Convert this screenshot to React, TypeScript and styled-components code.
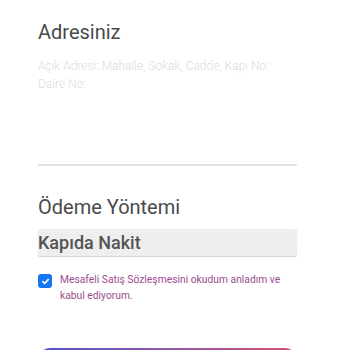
import styled, { createGlobalStyle } from "styled-components";

const GlobalStyle = createGlobalStyle`
  html, body {
    margin: 0;
    padding: 0;
    background: #ffffff;
    font-family: Roboto, "Liberation Sans", sans-serif;
  }
`;

const Page = styled.div`
  width: 350px;
  height: 350px;
  overflow: hidden;
  padding: 18px 53px 0 38px;
  box-sizing: border-box;
  display: flex;
  flex-direction: column;

  & > * {
    flex: none;
  }
`;

const SectionTitle = styled.h2<{ $top?: number }>`
  margin: ${({ $top }) => $top ?? 0}px 0 0;
  font-size: 20px;
  font-weight: 400;
  color: #4a4a4a;
  line-height: 28px;
`;

const AddressArea = styled.textarea`
  margin-top: 11px;
  width: 100%;
  height: 109px;
  box-sizing: border-box;
  border: none;
  border-bottom: 2px solid #e2e2e2;
  padding: 0;
  font-family: Roboto, "Liberation Sans", sans-serif;
  font-size: 12px;
  font-weight: 300;
  line-height: 18px;
  color: #444;
  resize: none;
  outline: none;
  background: transparent;

  &::placeholder {
    color: #dcdcdc;
  }
`;

const SelectBox = styled.div`
  margin-top: 8px;
  height: 27px;
  background: #eeeeee;
  border-radius: 2px;
  box-shadow: 0 1px 1px rgba(0, 0, 0, 0.18);
  display: flex;
  align-items: center;
  font-size: 18px;
  font-weight: 500;
  color: #545454;
`;

const AgreeRow = styled.label`
  margin-top: 16px;
  display: flex;
  gap: 8px;
  align-items: flex-start;
`;

const CheckBox = styled.span`
  flex: none;
  width: 14px;
  height: 14px;
  margin-top: 2px;
  border-radius: 3px;
  background: #1677f2;
  display: flex;
  align-items: center;
  justify-content: center;
`;

const AgreeText = styled.span`
  font-size: 10.3px;
  line-height: 16px;
  color: #9b4d92;
`;

const SubmitButton = styled.button`
  margin-top: 44px;
  height: 40px;
  border: none;
  border-radius: 12px;
  background: linear-gradient(90deg, #5054c4 0%, #8e5aa8 50%, #d6506c 100%);
`;

export default function App() {
  return (
    <>
      <GlobalStyle />
      <Page>
        <SectionTitle>Adresiniz</SectionTitle>
        <AddressArea placeholder="Açık Adresi: Mahalle, Sokak, Cadde, Kapı No: Daire No:" />
        <SectionTitle $top={27}>Ödeme Yöntemi</SectionTitle>
        <SelectBox>Kapıda Nakit</SelectBox>
        <AgreeRow>
          <CheckBox>
            <svg width="9" height="9" viewBox="0 0 10 10">
              <path d="M2 5.2 L4.1 7.2 L8 2.9" fill="none" stroke="#fff" strokeWidth="1.8" strokeLinecap="round" strokeLinejoin="round" />
            </svg>
          </CheckBox>
          <AgreeText>Mesafeli Satış Sözleşmesini okudum anladım ve kabul ediyorum.</AgreeText>
        </AgreeRow>
        <SubmitButton />
      </Page>
    </>
  );
}
